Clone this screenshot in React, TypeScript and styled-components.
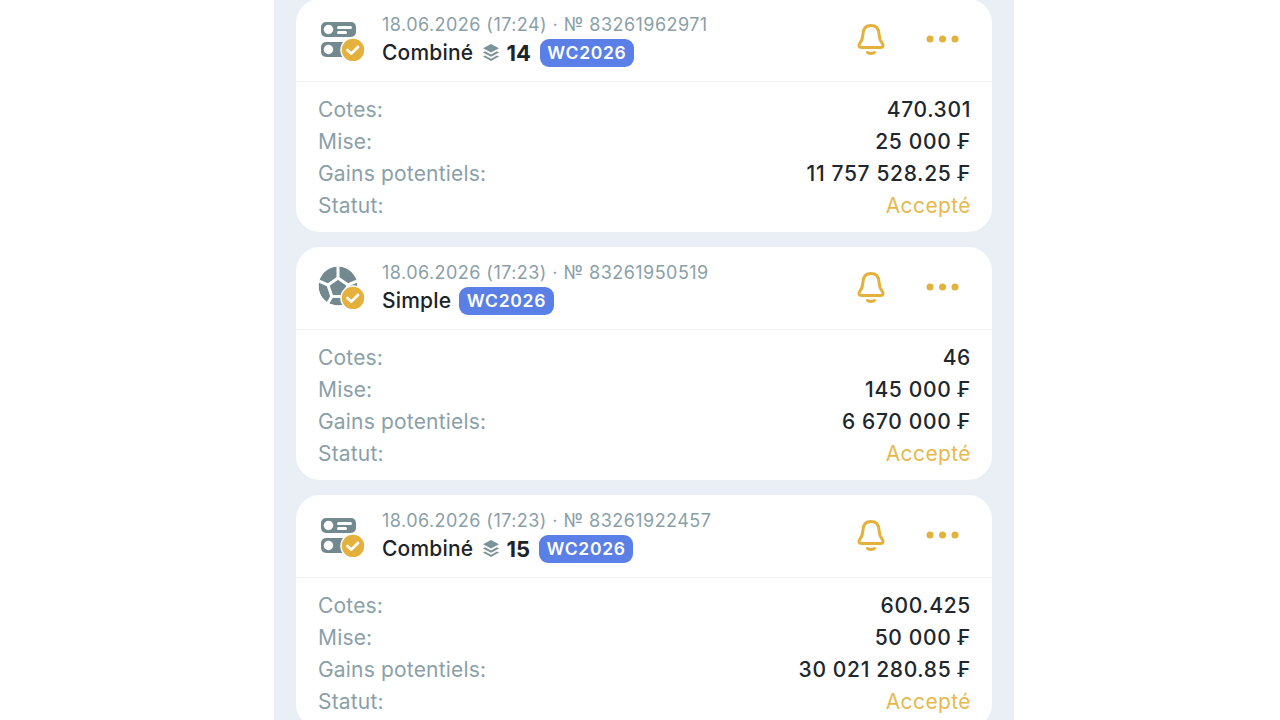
import React from "react";
import styled, { createGlobalStyle } from "styled-components";

const Global = createGlobalStyle`
  html, body { margin: 0; padding: 0; background: #fff; overflow: hidden; }
  body { font-family: Inter, "Liberation Sans", sans-serif; }
`;
const Page = styled.div`
  width: 1280px; height: 720px; overflow: hidden; display: flex; padding-left: 274px; box-sizing: border-box; background: #fff;
`;
const Column = styled.main`
  width: 740px; height: 720px; box-sizing: border-box; background: #eaeef5; padding: 0 22px;
  display: flex; flex-direction: column; gap: 15px; overflow: hidden;
`;
const Card = styled.article<{ $first?: boolean }>`
  flex: none; height: 233px; margin-top: ${(p) => (p.$first ? "-1px" : "0")};
  background: #fff; border-radius: 24px; display: flex; flex-direction: column;
`;
const Header = styled.header`
  height: 83px; flex: none; box-sizing: border-box; border-bottom: 1px solid #eef0f4;
  display: flex; align-items: center; padding: 0 32px 0 22px;
`;
const TypeIcon = styled.div`
  width: 46px; height: 44px; flex: none; margin-right: 18px; margin-top: -2px;
  svg { display: block; }
`;
const Titles = styled.div`
  flex: 1; min-width: 0; display: flex; flex-direction: column; gap: 3px;
`;
const Meta = styled.div`
  font-size: 18px; line-height: 22px; color: #8a9fa8; letter-spacing: 0.45px; white-space: nowrap;
`;
const TitleLine = styled.div`
  display: flex; align-items: center; height: 28px;
`;
const Title = styled.span`
  font-size: 21px; font-weight: 500; color: #1c2329; letter-spacing: 0.2px; margin-right: 8px;
`;
const Count = styled.span`
  display: flex; align-items: center; gap: 6px; font-size: 22px; font-weight: 700; color: #1c2329; margin: 0 9px 0 1px;
`;
const Badge = styled.span`
  height: 28px; box-sizing: border-box; padding: 0 7.5px; border-radius: 9px; background: #5a7fe6; color: #fff;
  font-size: 17.5px; font-weight: 600; letter-spacing: 0.7px; display: flex; align-items: center;
`;
const Actions = styled.div`
  display: flex; align-items: center; gap: 40px; margin-top: -3px;
`;
const Rows = styled.div`
  display: flex; flex-direction: column; padding: 11px 21px 0 22px;
`;
const Row = styled.div`
  height: 32px; display: flex; justify-content: space-between; align-items: center; font-size: 21px;
`;
const Label = styled.span`
  color: #8a9fa8; letter-spacing: 0.18px;
`;
const Value = styled.span<{ $accent?: boolean }>`
  font-weight: ${(p) => (p.$accent ? 400 : 500)};
  color: ${(p) => (p.$accent ? "#e6b94f" : "#20272d")};
  letter-spacing: ${(p) => (p.$accent ? "0.4px" : "0.65px")};
`;

const Bell = () => (
  <svg width="30" height="36" viewBox="0 0 30 36" fill="none" stroke="#e4b23c" strokeWidth="3" strokeLinecap="round" strokeLinejoin="round">
    <path d="M15 4.500c-5.500 0-7.800 3.800-8 8.500-.2 4.500-.8 6.500-3.500 9.800-1.300 1.800-.4 3.700 1.800 3.700h19.400c2.200 0 3.100-1.900 1.800-3.700C23.800 19.500 23.200 17.500 23 13c-.2-4.700-2.500-8.500-8-8.500Z" />
    <path d="M11.500 31.500c2.300 1.300 4.700 1.300 7 0" />
  </svg>
);
const Dots = () => (
  <svg width="34" height="8" viewBox="0 0 34 8" fill="#e4b23c">
    <circle cx="4" cy="4" r="3.500" />
    <circle cx="16.500" cy="4" r="3.500" />
    <circle cx="29" cy="4" r="3.500" />
  </svg>
);
const Check = () => (
  <g>
    <circle cx="35" cy="33" r="12" fill="#e4b23c" stroke="#fff" strokeWidth="1.500" />
    <path d="M29.500 33l3.800 3.700 6.700-6.700" fill="none" stroke="#fff" strokeWidth="2.600" strokeLinecap="round" strokeLinejoin="round" />
  </g>
);
const AccaIcon = () => (
  <svg width="46" height="44" viewBox="0 0 46 44">
    <rect x="3" y="5" width="35" height="15" rx="5" fill="#72898f" />
    <circle cx="10.500" cy="12.500" r="4.700" fill="#fff" />
    <rect x="19" y="9" width="15" height="3" rx="1.500" fill="#fff" />
    <rect x="19" y="14" width="10" height="3" rx="1.500" fill="#fff" />
    <rect x="3" y="25" width="28" height="15" rx="5" fill="#72898f" />
    <circle cx="10.500" cy="32.500" r="4.700" fill="#fff" />
    <Check />
  </svg>
);
const BallIcon = () => (
  <svg width="46" height="44" viewBox="0 0 46 44">
    <defs>
      <clipPath id="ball"><circle cx="20" cy="21" r="19.500" /></clipPath>
    </defs>
    <g clipPath="url(#ball)">
      <circle cx="20" cy="21" r="19.500" fill="#72898f" />
      <path d="M20 13l10 7-3.800 11.500H13.800L10 20Z" fill="#72898f" stroke="#fff" strokeWidth="3" strokeLinejoin="round" />
      <path d="M20 13V0M30 20l14-6M26.200 31.500l7 12M13.800 31.500l-7 12M10 20l-14-6" fill="none" stroke="#fff" strokeWidth="3" />
    </g>
    <Check />
  </svg>
);
const Stack = () => (
  <svg width="18" height="19" viewBox="0 0 18 19" fill="#7c939a">
    <path d="M9 1 17 5.200 9 9.500 1 5.200Z" />
    <path d="M3 8.300 9 11.500l6-3.200 2 1.100-8 4.300-8-4.300Z" />
    <path d="M3 12.500l6 3.200 6-3.200 2 1.100-8 4.400-8-4.400Z" />
  </svg>
);

type Bet = { meta: string; kind: "acca" | "single"; count?: number; odds: string; stake: string; win: string };
const bets: Bet[] = [
  { meta: "18.06.2026 (17:24) · № 83261962971", kind: "acca", count: 14, odds: "470.301", stake: "25 000 ₣", win: "11 757 528.25 ₣" },
  { meta: "18.06.2026 (17:23) · № 83261950519", kind: "single", odds: "46", stake: "145 000 ₣", win: "6 670 000 ₣" },
  { meta: "18.06.2026 (17:23) · № 83261922457", kind: "acca", count: 15, odds: "600.425", stake: "50 000 ₣", win: "30 021 280.85 ₣" },
];

export default function App() {
  return (
    <Page>
      <Global />
      <Column>
        {bets.map((b, i) => (
          <Card key={b.meta} $first={i === 0}>
            <Header>
              <TypeIcon>{b.kind === "acca" ? <AccaIcon /> : <BallIcon />}</TypeIcon>
              <Titles>
                <Meta>{b.meta}</Meta>
                <TitleLine>
                  <Title>{b.kind === "acca" ? "Combiné" : "Simple"}</Title>
                  {b.count !== undefined && (
                    <Count>
                      <Stack />
                      {b.count}
                    </Count>
                  )}
                  <Badge>WC2026</Badge>
                </TitleLine>
              </Titles>
              <Actions>
                <Bell />
                <Dots />
              </Actions>
            </Header>
            <Rows>
              <Row><Label>Cotes:</Label><Value>{b.odds}</Value></Row>
              <Row><Label>Mise:</Label><Value>{b.stake}</Value></Row>
              <Row><Label>Gains potentiels:</Label><Value>{b.win}</Value></Row>
              <Row><Label>Statut:</Label><Value $accent>Accepté</Value></Row>
            </Rows>
          </Card>
        ))}
      </Column>
    </Page>
  );
}
